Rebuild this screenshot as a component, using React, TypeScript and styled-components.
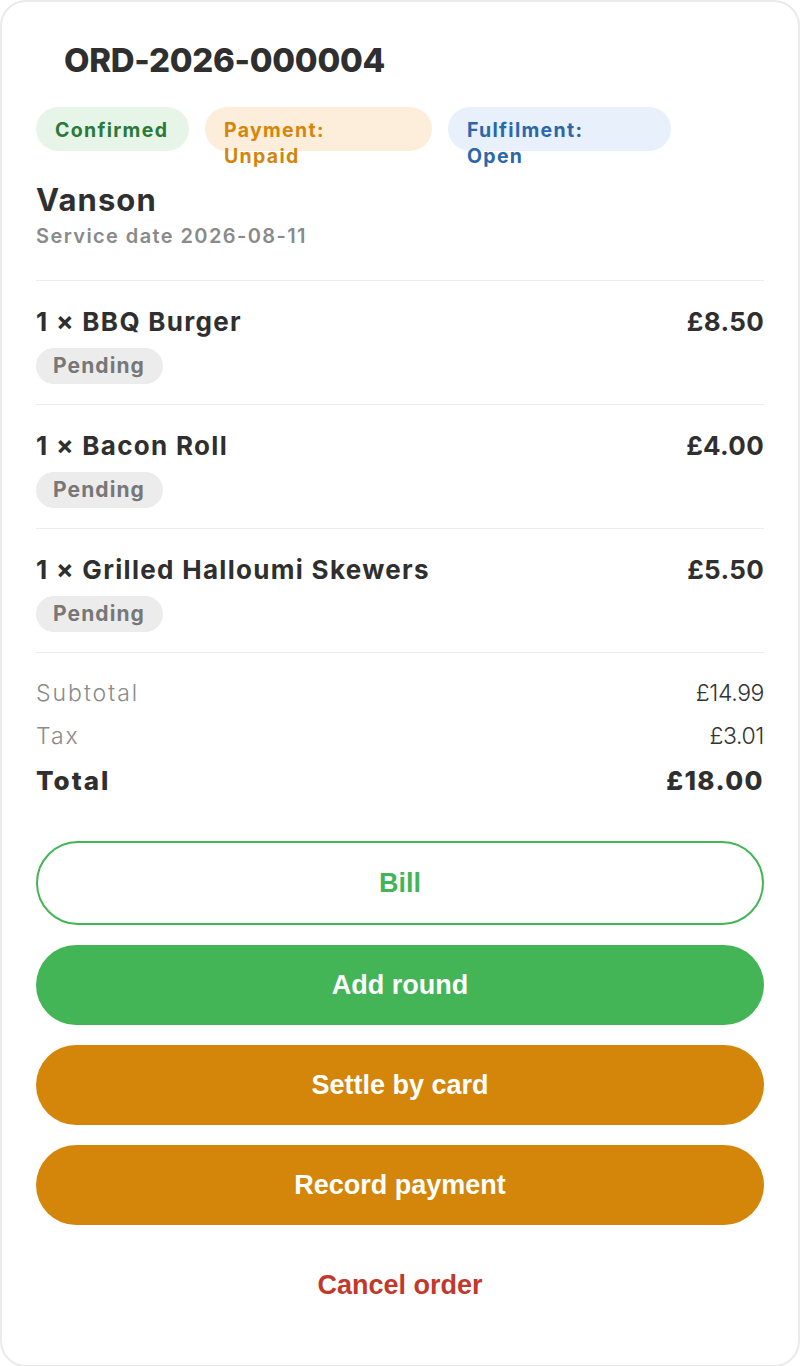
import React from 'react'
import styled, { createGlobalStyle } from 'styled-components'

const GlobalStyle = createGlobalStyle`
    * { box-sizing: border-box; }
    body {
        margin: 0;
        background: #ffffff;
        font-family: "Inter", "Noto Sans", sans-serif;
        color: #303030;
    }
`

type Tone = 'green' | 'amber' | 'blue' | 'grey'

const tones: Record<Tone, { bg: string; fg: string }> = {
    green: { bg: '#e7f5e9', fg: '#2b7a37' },
    amber: { bg: '#fdeedc', fg: '#d4860a' },
    blue: { bg: '#e8f0fb', fg: '#2a68ab' },
    grey: { bg: '#ececec', fg: '#777777' },
}

const items = [
    { name: '1 × BBQ Burger', price: '£8.50', status: 'Pending' },
    { name: '1 × Bacon Roll', price: '£4.00', status: 'Pending' },
    { name: '1 × Grilled Halloumi Skewers', price: '£5.50', status: 'Pending' },
]

const App = () => {
    return (
        <>
            <GlobalStyle />
            <CardStyled>
                <TitleStyled>ORD-2026-000004</TitleStyled>
                <PillRowStyled>
                    <PillStyled $tone="green" $width={153}>Confirmed</PillStyled>
                    <PillStyled $tone="amber" $width={227}>Payment:<br />Unpaid</PillStyled>
                    <PillStyled $tone="blue" $width={223}>Fulfilment:<br />Open</PillStyled>
                </PillRowStyled>
                <CustomerStyled>Vanson</CustomerStyled>
                <DateStyled>Service date 2026-08-11</DateStyled>
                <ItemListStyled>
                    {items.map((item) => (
                        <ItemRowStyled key={item.name}>
                            <ItemTopStyled>
                                <ItemNameStyled>{item.name}</ItemNameStyled>
                                <PriceStyled>{item.price}</PriceStyled>
                            </ItemTopStyled>
                            <StatusStyled>{item.status}</StatusStyled>
                        </ItemRowStyled>
                    ))}
                </ItemListStyled>
                <TotalsStyled>
                    <SumRowStyled><SumLabelStyled>Subtotal</SumLabelStyled><SumValueStyled>£14.99</SumValueStyled></SumRowStyled>
                    <SumRowStyled><SumLabelStyled>Tax</SumLabelStyled><SumValueStyled>£3.01</SumValueStyled></SumRowStyled>
                    <TotalRowStyled><span>Total</span><TotalValueStyled>£18.00</TotalValueStyled></TotalRowStyled>
                </TotalsStyled>
                <ActionsStyled>
                    <ButtonStyled $variant="outline">Bill</ButtonStyled>
                    <ButtonStyled $variant="green">Add round</ButtonStyled>
                    <ButtonStyled $variant="amber">Settle by card</ButtonStyled>
                    <ButtonStyled $variant="amber">Record payment</ButtonStyled>
                    <ButtonStyled $variant="danger">Cancel order</ButtonStyled>
                </ActionsStyled>
            </CardStyled>
        </>
    )
}

export default App

const CardStyled = styled.div`
    min-height: 1366px;
    border: 2px solid #eaeaea;
    border-radius: 26px;
    background: #fff;
    padding: 40px 34px 40px 34px;
    display: flex;
    flex-direction: column;
`
const TitleStyled = styled.h1`
    margin: 0;
    padding: 0 28px;
    font-size: 33px;
    line-height: 36px;
    font-weight: 800;
    letter-spacing: -0.3px;
    color: #2f2f2f;
`
const PillRowStyled = styled.div`
    display: flex;
    gap: 16px;
    margin-top: 29px;
`
const PillStyled = styled.span<{ $tone: Tone; $width: number }>`
    display: block;
    width: ${(p) => p.$width}px;
    height: 44px;
    padding: 10px 19px;
    border-radius: 22px;
    background: ${(p) => tones[p.$tone].bg};
    color: ${(p) => tones[p.$tone].fg};
    font-size: 19.5px;
    line-height: 26px;
    font-weight: 700;
    letter-spacing: 1.3px;
    white-space: nowrap;
`
const CustomerStyled = styled.div`
    margin-top: 32px;
    font-size: 31px;
    line-height: 34px;
    font-weight: 700;
    letter-spacing: 1.1px;
    color: #2f2f2f;
`
const DateStyled = styled.div`
    margin-top: 6px;
    font-size: 20px;
    line-height: 26px;
    font-weight: 600;
    letter-spacing: 1.4px;
    color: #8a8a8a;
`
const ItemListStyled = styled.div`
    margin-top: 31px;
    border-top: 1px solid #ececec;
`
const ItemRowStyled = styled.div`
    padding: 26px 0 20px;
    border-bottom: 1px solid #ececec;
    display: flex;
    flex-direction: column;
    align-items: flex-start;
    gap: 11px;
`
const ItemTopStyled = styled.div`
    width: 100%;
    display: flex;
    justify-content: space-between;
`
const ItemNameStyled = styled.span`
    font-size: 26px;
    line-height: 30px;
    font-weight: 700;
    letter-spacing: 1.3px;
    color: #2f2f2f;
`
const PriceStyled = styled(ItemNameStyled)`
    letter-spacing: 0.3px;
`
const StatusStyled = styled.span`
    height: 36px;
    width: 127px;
    padding: 0 17px;
    border-radius: 18px;
    background: ${tones.grey.bg};
    color: ${tones.grey.fg};
    font-size: 21px;
    line-height: 36px;
    font-weight: 700;
    letter-spacing: 1.1px;
`
const TotalsStyled = styled.div`
    margin-top: 26px;
    display: flex;
    flex-direction: column;
    gap: 15px;
`
const SumRowStyled = styled.div`
    display: flex;
    justify-content: space-between;
    font-size: 23px;
    line-height: 28px;
    font-weight: 300;
    color: #8a8a8a;
`
const SumLabelStyled = styled.span`
    letter-spacing: 2px;
`
const SumValueStyled = styled.span`
    color: #333;
    letter-spacing: -0.4px;
`
const TotalRowStyled = styled.div`
    display: flex;
    justify-content: space-between;
    font-size: 26px;
    line-height: 32px;
    font-weight: 800;
    letter-spacing: 2px;
    color: #2f2f2f;
`
const TotalValueStyled = styled.span`
    letter-spacing: 1.4px;
`
const ActionsStyled = styled.div`
    margin-top: 44px;
    display: flex;
    flex-direction: column;
    gap: 20px;
`
type Variant = 'outline' | 'green' | 'amber' | 'danger'

const variants: Record<Variant, string> = {
    outline: 'background: #fff; color: #43b556; border: 2px solid #43b556; height: 84px;',
    green: 'background: #43b556; color: #fff; border: none;',
    amber: 'background: #d4860a; color: #fff; border: none;',
    danger: 'background: transparent; color: #c0392b; border: none;',
}

const ButtonStyled = styled.button<{ $variant: Variant }>`
    height: 80px;
    width: 100%;
    border-radius: 42px;
    font-family: "Liberation Sans", Arial, sans-serif;
    font-size: 27px;
    font-weight: 700;
    cursor: pointer;
    ${(p) => variants[p.$variant]}
`
